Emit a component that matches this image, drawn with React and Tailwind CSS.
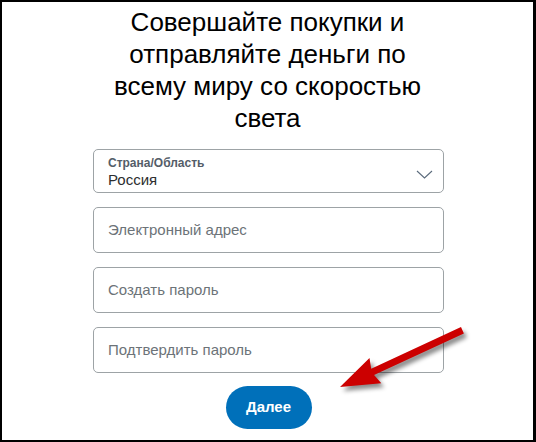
import React from 'react';

const fields = ['Электронный адрес', 'Создать пароль', 'Подтвердить пароль'];

function CountrySelect() {
  return (
    <div className="flex h-[44px] w-[351px] items-center justify-between rounded-[5px] border border-[#9da3a6] pl-[14px] pr-[10px]">
      <div className="flex flex-col self-start pt-[6px]">
        <span className="text-[12px] leading-[14px] font-semibold text-[#545d68]">Страна/Область</span>
        <span className="text-[15px] leading-[19px] text-[#2c2e2f]">Россия</span>
      </div>
      <svg width="17" height="9" viewBox="0 0 17 9" className="mt-[6px]">
        <path d="M1 1 L8.5 8 L16 1" fill="none" stroke="#5b6b7c" strokeWidth="1.1" />
      </svg>
    </div>
  );
}

function TextField({ placeholder }) {
  return (
    <div className="flex h-[46px] w-[351px] items-center rounded-[5px] border border-[#9da3a6] pl-[14px]">
      <span className="text-[15px] leading-[18px] text-[#6c7378]">{placeholder}</span>
    </div>
  );
}

function RedArrow() {
  return (
    <svg
      className="pointer-events-none absolute left-0 top-0 drop-shadow-[3px_4px_2px_rgba(0,0,0,0.45)]"
      width="536"
      height="442"
      viewBox="0 0 536 442"
    >
      <polygon
        points="340,387 369.5,357.9 371.2,368.7 461,327.1 463.9,333.5 374.1,375.1 381.3,383.3"
        fill="#cc0000"
      />
    </svg>
  );
}

export default function App() {
  return (
    <div className="relative h-[442px] w-[536px] bg-white font-['Liberation_Sans',Arial,sans-serif]">
      <div className="flex h-full w-full flex-col items-center border-b-2 border-l-2 border-r-[3px] border-t-2 border-black bg-white">
        <h1 className="mt-[4px] text-center text-[26px] leading-[32px] font-normal text-black">
          Совершайте покупки и
          <br />
          отправляйте деньги по
          <br />
          всему миру со скоростью
          <br />
          света
        </h1>
        <div className="mt-[15px] ml-[2px] flex flex-col items-center gap-[14px]">
          <CountrySelect />
          {fields.map((f) => (
            <TextField key={f} placeholder={f} />
          ))}
          <button className="-mt-[1px] h-[43px] w-[86px] rounded-full bg-[#0070ba] text-[15px] font-bold text-white">
            Далее
          </button>
        </div>
      </div>
      <RedArrow />
    </div>
  );
}
